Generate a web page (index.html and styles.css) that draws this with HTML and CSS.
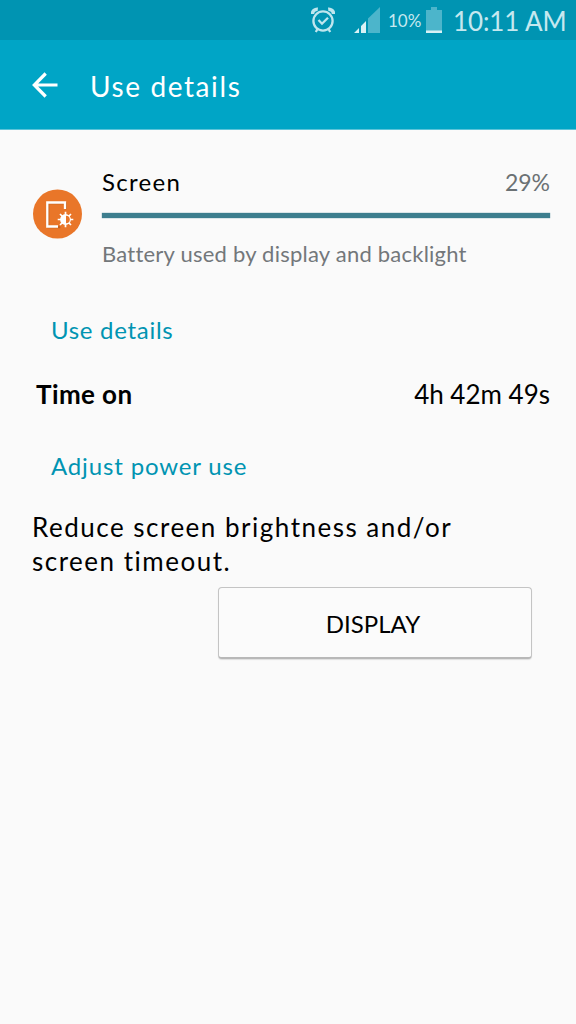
FILE: index.html
```html
<!DOCTYPE html>
<html lang="en">
<head>
<meta charset="utf-8">
<title>Use details</title>
<link rel="stylesheet" href="styles.css">
</head>
<body>
<div class="status">
  <svg class="alarm" width="24" height="26" viewBox="0 0 24 26" fill="none" stroke="#bfe6ee">
    <circle cx="12" cy="14" r="9.600" stroke-width="2.300"/>
    <path d="M7.500 13l3.500 3.700 6-6" stroke-width="2.300"/>
    <path d="M1.400 7c0-3 2.600-5 5.400-4.700M22.600 7c0-3-2.600-5-5.400-4.700" stroke-width="3.600"/>
    <path d="M6.500 22l-1.700 3M17.500 22l1.700 3" stroke-width="2.300"/>
  </svg>
  <svg class="signal" width="26" height="26" viewBox="0 0 26 26">
    <path d="M14 11.500L26 0v26H14z" fill="#4cb5cb"/>
    <path d="M0 26l5-5v5zM7 26v-7l5-5v12z" fill="#d9f1f5"/>
  </svg>
  <span class="percent">10%</span>
  <svg class="battery" width="16" height="26" viewBox="0 0 16 26">
    <path d="M5 0h6v3h5v23H0V3h5z" fill="#4cb5cb"/>
    <path d="M0 23.500h16V26H0z" fill="#d9f1f5"/>
  </svg>
  <span class="clock">10:11 AM</span>
</div>
<header class="bar">
  <svg class="back" width="26" height="26" viewBox="0 0 26 26" fill="none" stroke="#fff" stroke-width="3.200">
    <path d="M25.500 13H2.500M13.700 1.500L2.300 13l11.400 11.500"/>
  </svg>
  <h1 class="title">Use details</h1>
</header>
<main class="content">
  <section class="usage">
    <svg class="badge" width="50" height="50" viewBox="0 0 50 50">
      <circle cx="25.500" cy="25" r="24.500" fill="#e97629"/>
      <path d="M33 19.500v-6H15.500v24h12" fill="none" stroke="#c45f1c" stroke-width="2" transform="translate(.8 .8)"/>
      <path d="M33 20v-6.500H15.300v24H26" fill="none" stroke="#fff" stroke-width="2.300"/>
      <g transform="translate(33.500 30.500)">
        <circle r="7" fill="#e97629"/>
        <path d="M0-7.800V7.800M-7.800 0H7.800M-5.500-5.500L5.500 5.500M-5.500 5.500L5.500-5.500" stroke="#fff" stroke-width="1.700"/>
        <circle r="5.400" fill="#fff"/>
        <path d="M.5-3.800a3.800 3.800 0 0 1 0 7.600z" fill="#e97629"/>
      </g>
    </svg>
    <div class="meter">
      <div class="row"><span class="name">Screen</span><span class="share">29%</span></div>
      <div class="track"></div>
      <p class="desc">Battery used by display and backlight</p>
    </div>
  </section>
  <h2 class="heading first">Use details</h2>
  <div class="time"><b class="label">Time on</b><span class="value">4h 42m 49s</span></div>
  <h2 class="heading second">Adjust power use</h2>
  <p class="advice">Reduce screen brightness and/or<br>screen timeout.</p>
  <button class="button">DISPLAY</button>
</main>
</body>
</html>
```
FILE: styles.css
```css
* { box-sizing: border-box; margin: 0; padding: 0; }
body {
  width: 576px; height: 1024px; overflow: hidden;
  background: #fafafa; color: #000;
  font-family: Lato, "Open Sans", sans-serif;
  white-space: nowrap;
}
svg { display: block; flex: none; }
.status {
  height: 40px; background: #0094b2; color: #c5e8ef;
  display: flex; align-items: flex-start; padding: 7px 10px 0 311px;
}
.signal { margin-left: 19px; }
.percent { width: 32px; margin-left: 8px; font-size: 17px; line-height: 27px; }
.battery { margin-left: 6px; }
.clock { margin-left: 11px; font-size: 26px; line-height: 28px; letter-spacing: -.1px; }
.bar {
  height: 90px; background: #00a5c6; border-bottom: 1px solid #5cc4d9; color: #fff;
  display: flex; align-items: flex-start; padding: 32px 0 0 32px;
}
.title { margin: -3px 0 0 32px; font-size: 28px; font-weight: 400; line-height: 34px; letter-spacing: 1.6px; }
.content { padding: 37px 26px 0 32px; }
.usage { display: flex; }
.badge { margin-top: 22px; }
.meter { flex: 1; margin-left: 20px; }
.row { display: flex; justify-content: space-between; line-height: 30px; font-size: 24px; }
.name { letter-spacing: 1.3px; }
.share { font-size: 23px; color: #6b7174; }
.track { height: 5px; margin-top: 16px; background: #3d7e8e; box-shadow: 0 0 1px #3d7e8e; }
.desc { margin-top: 21px; font-size: 22px; line-height: 29px; letter-spacing: .23px; color: #73777a; }
.heading { margin-left: 19px; font-size: 24px; font-weight: 400; line-height: 30px; color: #0094b2; }
.first { margin-top: 47px; letter-spacing: .7px; }
.second { margin-top: 40px; letter-spacing: .85px; }
.time { display: flex; justify-content: space-between; margin-top: 32px; padding-left: 4px; line-height: 34px; font-size: 26px; }
.label { letter-spacing: .4px; }
.advice { margin-top: 29px; font-size: 26px; line-height: 34px; letter-spacing: 1.5px; }
.button {
  display: block; width: 314px; height: 72px; margin: 9px 0 0 186px; padding: 1px 4px 0 0;
  border: 1px solid #c4c4c4; border-bottom: 2px solid #b8b8b8; border-radius: 4px;
  background: #fbfbfb; box-shadow: 0 1px 1px #dedede;
  color: #000; font: 24px Lato, sans-serif;
}
```
